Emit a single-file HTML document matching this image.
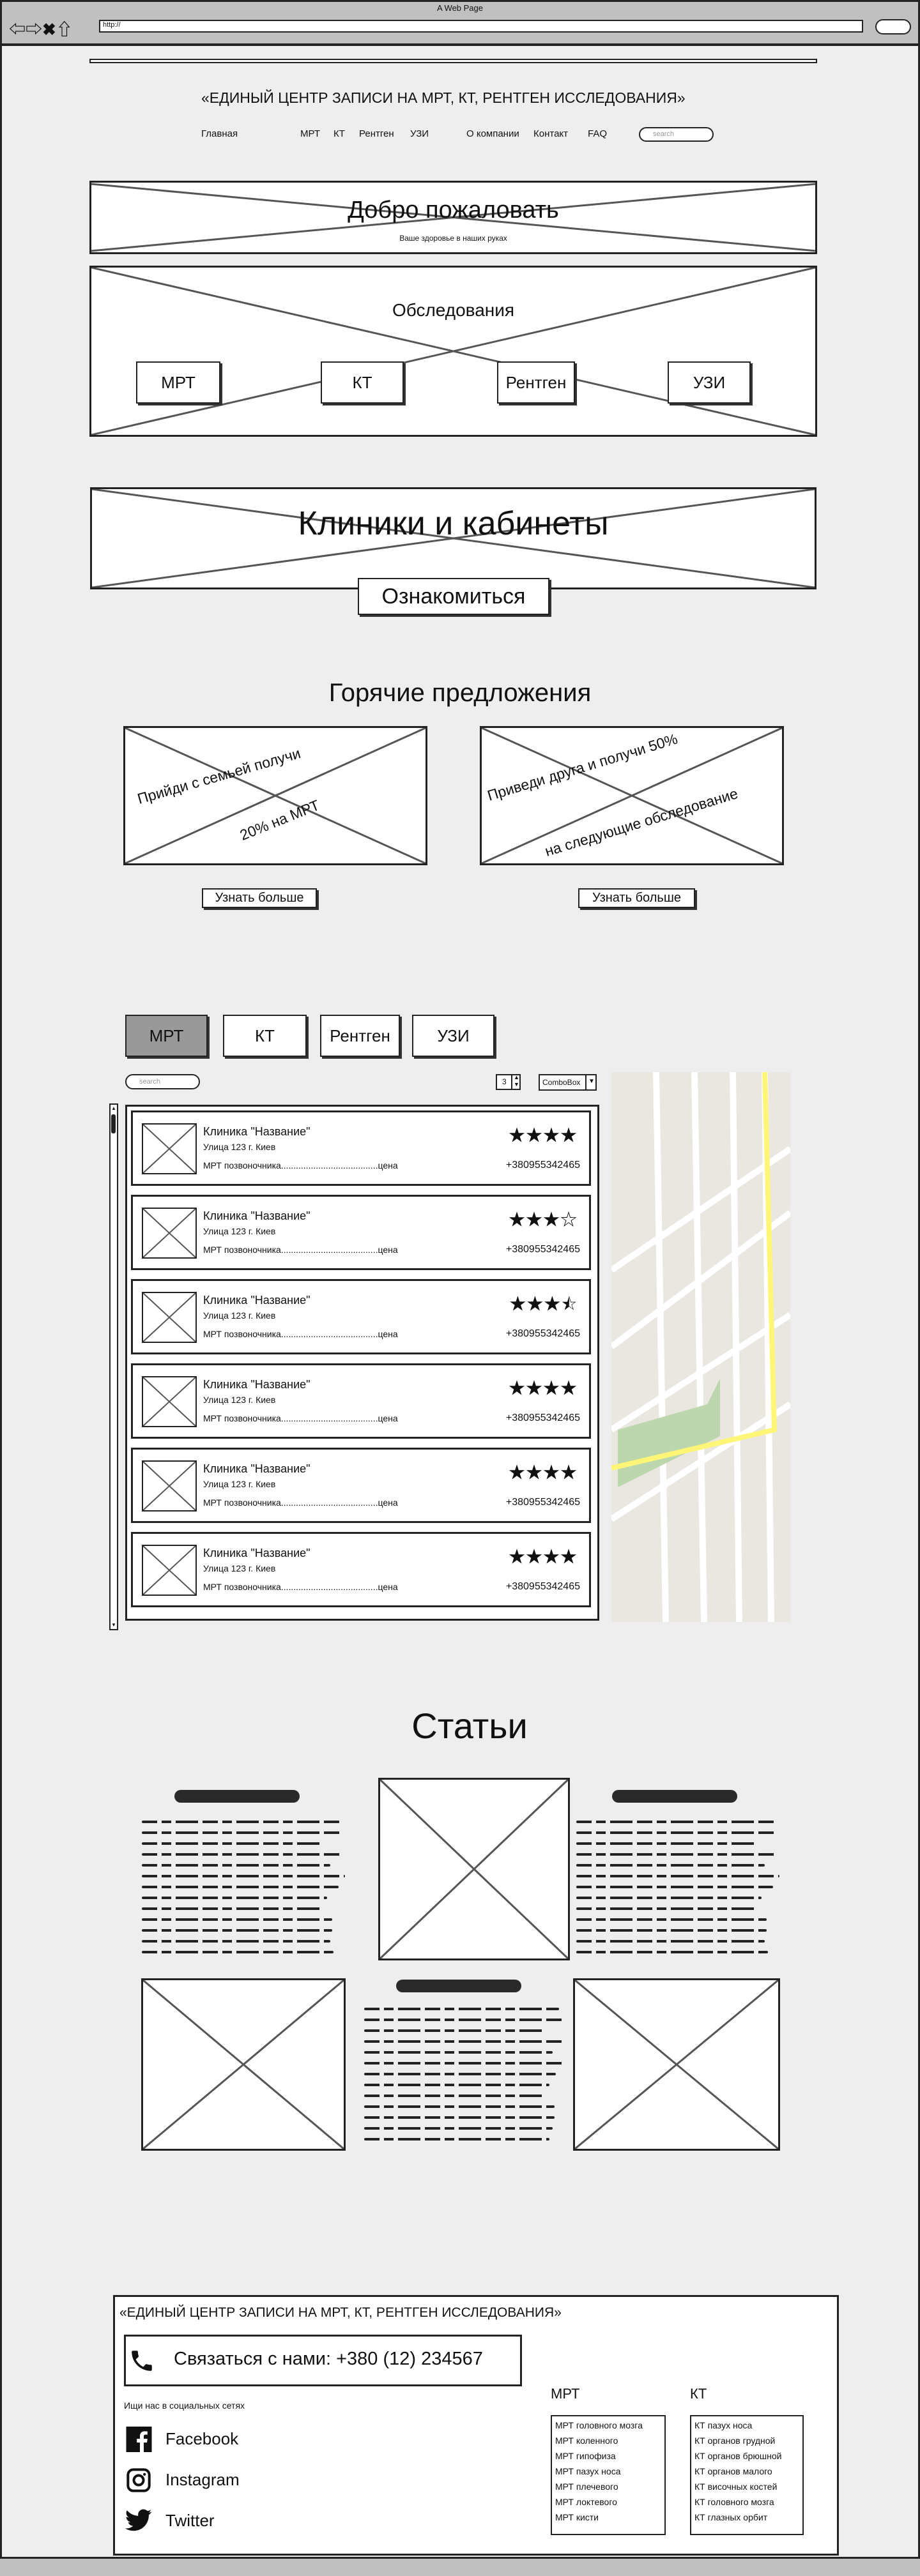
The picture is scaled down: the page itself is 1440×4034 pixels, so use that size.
<!DOCTYPE html>
<html><head><meta charset="utf-8">
<style>
*{box-sizing:border-box;margin:0;padding:0}
html,body{width:1440px;height:4034px;overflow:hidden}
body{background:#eeeeee;position:relative;font-family:"Liberation Sans Narrow","Liberation Sans","Noto Sans CJK SC",sans-serif;color:#111}
.a{position:absolute}
.box{position:absolute;background:#fff;border:3px solid #222}
.x{position:absolute;left:0;top:0;width:100%;height:100%}
.btn{position:absolute;background:#fff;border:2px solid #222;box-shadow:3px 3px 0 #333;display:flex;align-items:center;justify-content:center}
.t{position:absolute;white-space:nowrap}
.sc{position:absolute;height:4px;border-radius:2px;background:repeating-linear-gradient(90deg,#222 0 24px,transparent 24px 31px,#222 31px 46px,transparent 46px 53px,#222 53px 88px,transparent 88px 95px)}
.hd{position:absolute;height:20px;border-radius:10px;background:#2a2a2a}
.card{position:absolute;left:205px;width:720px;height:118px;background:#fff;border:3px solid #222}
.card .im{position:absolute;left:14px;top:17px;width:86px;height:80px;border:2px solid #222}
.card .n{position:absolute;left:110px;top:20px;font-size:18px}
.card .ad{position:absolute;left:110px;top:46px;font-size:14px}
.card .pr{position:absolute;left:110px;top:75px;font-size:14px}
.card .st{position:absolute;right:18px;top:16px;font-size:26px;letter-spacing:1px}
.card .ph{position:absolute;right:14px;top:74px;font-size:16px}
.list li{list-style:none;font-size:14px;height:24px}
.ot{position:absolute;white-space:nowrap;font-size:23px;line-height:23px;transform-origin:left bottom}
</style></head><body>

<div class="a" style="left:0;top:0;width:1440px;height:72px;background:#c0c0c0;border:3px solid #222;border-bottom-width:4px"></div>
<div class="t" style="left:0;width:1440px;text-align:center;top:5px;font-size:13px">A Web Page</div>
<div class="t" style="left:14px;top:26px;font-size:26px;font-weight:bold">⇦⇨✖⇧</div>
<div class="a" style="left:155px;top:31px;width:1196px;height:20px;background:#fff;border:2px solid #222;font-size:11px;padding-left:4px">http://</div>
<div class="a" style="left:1370px;top:30px;width:56px;height:24px;background:#fff;border:2px solid #222;border-radius:12px"></div>
<div class="a" style="left:0;top:72px;width:3px;height:3934px;background:#222"></div>
<div class="a" style="left:1437px;top:72px;width:3px;height:3934px;background:#222"></div>
<div class="a" style="left:0;top:4004px;width:1440px;height:30px;background:#c0c0c0;border-top:3px solid #222"></div>

<div class="a" style="left:140px;top:92px;width:1139px;height:7px;background:#fff;border:2px solid #222"></div>
<div class="t" style="left:315px;top:140px;font-size:23px">«ЕДИНЫЙ ЦЕНТР ЗАПИСИ НА МРТ, КТ, РЕНТГЕН ИССЛЕДОВАНИЯ»</div>
<div class="t" style="left:315px;top:201px;font-size:15px">Главная</div>
<div class="t" style="left:470px;top:201px;font-size:15px">МРТ</div>
<div class="t" style="left:522px;top:201px;font-size:15px">КТ</div>
<div class="t" style="left:562px;top:201px;font-size:15px">Рентген</div>
<div class="t" style="left:642px;top:201px;font-size:15px">УЗИ</div>
<div class="t" style="left:730px;top:201px;font-size:15px">О компании</div>
<div class="t" style="left:835px;top:201px;font-size:15px">Контакт</div>
<div class="t" style="left:920px;top:201px;font-size:15px">FAQ</div>
<div class="a" style="left:1000px;top:199px;width:117px;height:23px;background:#fff;border:2px solid #222;border-radius:12px;font-size:11px;color:#999;padding:3px 0 0 20px">search</div>

<div class="box" style="left:140px;top:283px;width:1139px;height:115px">
<svg class="x" viewBox="0 0 100 100" preserveAspectRatio="none"><path d="M0 2L100 98M0 98L100 2" stroke="#555" stroke-width="3" vector-effect="non-scaling-stroke"/></svg>
<div class="t" style="left:0;width:100%;text-align:center;top:22px;font-size:38px">Добро пожаловать</div>
<div class="t" style="left:0;width:100%;text-align:center;top:80px;font-size:12px">Ваше здоровье в наших руках</div>
</div>

<div class="box" style="left:140px;top:416px;width:1139px;height:268px">
<svg class="x" viewBox="0 0 100 100" preserveAspectRatio="none"><path d="M0 0L100 100M0 100L100 0" stroke="#555" stroke-width="3" vector-effect="non-scaling-stroke"/></svg>
<div class="t" style="left:0;width:100%;text-align:center;top:51px;font-size:28px">Обследования</div>
</div>
<div class="btn" style="left:213px;top:566px;width:132px;height:66px;font-size:26px">МРТ</div>
<div class="btn" style="left:502px;top:566px;width:130px;height:66px;font-size:26px">КТ</div>
<div class="btn" style="left:778px;top:566px;width:122px;height:66px;font-size:26px">Рентген</div>
<div class="btn" style="left:1045px;top:566px;width:130px;height:66px;font-size:26px">УЗИ</div>

<div class="box" style="left:141px;top:763px;width:1137px;height:160px">
<svg class="x" viewBox="0 0 100 100" preserveAspectRatio="none"><path d="M0 0L100 100M0 100L100 0" stroke="#555" stroke-width="3" vector-effect="non-scaling-stroke"/></svg>
<div class="t" style="left:0;width:100%;text-align:center;top:24px;font-size:52px">Клиники и кабинеты</div>
</div>
<div class="btn" style="left:560px;top:905px;width:300px;height:58px;font-size:34px">Ознакомиться</div>

<div class="t" style="left:0;width:1440px;text-align:center;top:1063px;font-size:40px">Горячие предложения</div>

<div class="box" style="left:193px;top:1137px;width:476px;height:218px">
<svg class="x" viewBox="0 0 100 100" preserveAspectRatio="none"><path d="M0 0L100 100M0 100L100 0" stroke="#555" stroke-width="3" vector-effect="non-scaling-stroke"/></svg>
<div class="ot" style="left:23px;top:100px;transform:rotate(-16deg)">Прийди с семьей получи</div>
<div class="ot" style="left:185px;top:157px;transform:rotate(-22deg)">20% на МРТ</div>
</div>
<div class="box" style="left:751px;top:1137px;width:476px;height:218px">
<svg class="x" viewBox="0 0 100 100" preserveAspectRatio="none"><path d="M0 0L100 100M0 100L100 0" stroke="#555" stroke-width="3" vector-effect="non-scaling-stroke"/></svg>
<div class="ot" style="left:13px;top:95px;transform:rotate(-17deg)">Приведи друга и получи 50%</div>
<div class="ot" style="left:103px;top:182px;transform:rotate(-17deg)">на следующие обследование</div>
</div>
<div class="btn" style="left:316px;top:1391px;width:180px;height:31px;font-size:20px">Узнать больше</div>
<div class="btn" style="left:905px;top:1391px;width:183px;height:31px;font-size:20px">Узнать больше</div>

<div class="btn" style="left:196px;top:1589px;width:129px;height:66px;font-size:26px;background:#999">МРТ</div>
<div class="btn" style="left:349px;top:1589px;width:131px;height:66px;font-size:26px">КТ</div>
<div class="btn" style="left:501px;top:1589px;width:125px;height:66px;font-size:26px">Рентген</div>
<div class="btn" style="left:645px;top:1589px;width:129px;height:66px;font-size:26px">УЗИ</div>

<div class="a" style="left:196px;top:1682px;width:117px;height:24px;background:#fff;border:2px solid #222;border-radius:12px;font-size:11px;color:#999;padding:4px 0 0 20px">search</div>
<div class="a" style="left:776px;top:1682px;width:39px;height:25px;background:#fff;border:2px solid #222;font-size:12px;padding:3px 0 0 8px">3</div>
<div class="a" style="left:800px;top:1682px;width:15px;height:25px;border-left:2px solid #222;font-size:9px;line-height:11px;text-align:center">▲<br>▼</div>
<div class="a" style="left:843px;top:1682px;width:91px;height:26px;background:#fff;border:2px solid #222;font-size:12px;padding:4px 0 0 4px">ComboBox</div>
<div class="a" style="left:916px;top:1682px;width:18px;height:26px;border-left:2px solid #222;font-size:10px;padding:6px 0 0 3px">▼</div>

<svg class="a" style="left:957px;top:1679px" width="280" height="861" viewBox="0 0 280 861">
<rect width="280" height="861" fill="#e9e7e0"/>
<g stroke="#fff" stroke-width="10" fill="none">
<path d="M70 0L85 861M130 0L145 861M190 0L200 861M240 0L250 861"/>
<path d="M0 310L280 120M0 430L280 220M0 560L280 380M0 700L280 520"/>
</g>
<path d="M10 560L150 520L170 480L170 570L10 650Z" fill="#bcd7ad"/>
<path d="M240 0L255 560L0 620" stroke="#fff576" stroke-width="8" fill="none"/>
</svg>

<div class="a" style="left:171px;top:1728px;width:14px;height:825px;background:#fff;border:2px solid #222"></div>
<div class="a" style="left:174px;top:1731px;width:8px;height:10px;font-size:8px">▲</div>
<div class="a" style="left:174px;top:1745px;width:7px;height:30px;background:#222;border-radius:3px"></div>
<div class="a" style="left:174px;top:2540px;width:8px;height:10px;font-size:8px">▼</div>
<div class="a" style="left:196px;top:1730px;width:742px;height:808px;background:#fff;border:3px solid #222"></div>

<div class="card" style="top:1739px"><div class="im"><svg class="x" viewBox="0 0 100 100" preserveAspectRatio="none"><path d="M0 0L100 100M0 100L100 0" stroke="#555" stroke-width="2" vector-effect="non-scaling-stroke"/></svg></div><div class="n">Клиника "Название"</div><div class="ad">Улица 123 г. Киев</div><div class="pr">МРТ позвоночника.......................................цена</div><div class="st">★★★★</div><div class="ph">+380955342465</div></div>
<div class="card" style="top:1871px"><div class="im"><svg class="x" viewBox="0 0 100 100" preserveAspectRatio="none"><path d="M0 0L100 100M0 100L100 0" stroke="#555" stroke-width="2" vector-effect="non-scaling-stroke"/></svg></div><div class="n">Клиника "Название"</div><div class="ad">Улица 123 г. Киев</div><div class="pr">МРТ позвоночника.......................................цена</div><div class="st">★★★☆</div><div class="ph">+380955342465</div></div>
<div class="card" style="top:2003px"><div class="im"><svg class="x" viewBox="0 0 100 100" preserveAspectRatio="none"><path d="M0 0L100 100M0 100L100 0" stroke="#555" stroke-width="2" vector-effect="non-scaling-stroke"/></svg></div><div class="n">Клиника "Название"</div><div class="ad">Улица 123 г. Киев</div><div class="pr">МРТ позвоночника.......................................цена</div><div class="st">★★★⯪</div><div class="ph">+380955342465</div></div>
<div class="card" style="top:2135px"><div class="im"><svg class="x" viewBox="0 0 100 100" preserveAspectRatio="none"><path d="M0 0L100 100M0 100L100 0" stroke="#555" stroke-width="2" vector-effect="non-scaling-stroke"/></svg></div><div class="n">Клиника "Название"</div><div class="ad">Улица 123 г. Киев</div><div class="pr">МРТ позвоночника.......................................цена</div><div class="st">★★★★</div><div class="ph">+380955342465</div></div>
<div class="card" style="top:2267px"><div class="im"><svg class="x" viewBox="0 0 100 100" preserveAspectRatio="none"><path d="M0 0L100 100M0 100L100 0" stroke="#555" stroke-width="2" vector-effect="non-scaling-stroke"/></svg></div><div class="n">Клиника "Название"</div><div class="ad">Улица 123 г. Киев</div><div class="pr">МРТ позвоночника.......................................цена</div><div class="st">★★★★</div><div class="ph">+380955342465</div></div>
<div class="card" style="top:2399px"><div class="im"><svg class="x" viewBox="0 0 100 100" preserveAspectRatio="none"><path d="M0 0L100 100M0 100L100 0" stroke="#555" stroke-width="2" vector-effect="non-scaling-stroke"/></svg></div><div class="n">Клиника "Название"</div><div class="ad">Улица 123 г. Киев</div><div class="pr">МРТ позвоночника.......................................цена</div><div class="st">★★★★</div><div class="ph">+380955342465</div></div>

<div class="t" style="left:0;width:1470px;text-align:center;top:2670px;font-size:56px">Статьи</div>

<div class="hd" style="left:273px;top:2803px;width:196px"></div>
<div class="hd" style="left:958px;top:2803px;width:196px"></div>
<div class="hd" style="left:620px;top:3100px;width:196px"></div>

<div class="box" style="left:592px;top:2784px;width:300px;height:286px"><svg class="x" viewBox="0 0 100 100" preserveAspectRatio="none"><path d="M0 0L100 100M0 100L100 0" stroke="#555" stroke-width="3" vector-effect="non-scaling-stroke"/></svg></div>
<div class="box" style="left:221px;top:3098px;width:320px;height:270px"><svg class="x" viewBox="0 0 100 100" preserveAspectRatio="none"><path d="M0 0L100 100M0 100L100 0" stroke="#555" stroke-width="3" vector-effect="non-scaling-stroke"/></svg></div>
<div class="box" style="left:897px;top:3098px;width:324px;height:270px"><svg class="x" viewBox="0 0 100 100" preserveAspectRatio="none"><path d="M0 0L100 100M0 100L100 0" stroke="#555" stroke-width="3" vector-effect="non-scaling-stroke"/></svg></div>

<div class="sc" style="left:222px;top:2851px;width:310px"></div>
<div class="sc" style="left:222px;top:2868px;width:315px"></div>
<div class="sc" style="left:222px;top:2885px;width:285px"></div>
<div class="sc" style="left:222px;top:2902px;width:315px"></div>
<div class="sc" style="left:222px;top:2919px;width:295px"></div>
<div class="sc" style="left:222px;top:2936px;width:318px"></div>
<div class="sc" style="left:222px;top:2953px;width:308px"></div>
<div class="sc" style="left:222px;top:2970px;width:290px"></div>
<div class="sc" style="left:222px;top:2987px;width:285px"></div>
<div class="sc" style="left:222px;top:3004px;width:298px"></div>
<div class="sc" style="left:222px;top:3021px;width:298px"></div>
<div class="sc" style="left:222px;top:3038px;width:295px"></div>
<div class="sc" style="left:222px;top:3055px;width:300px"></div>
<div class="sc" style="left:902px;top:2851px;width:310px"></div>
<div class="sc" style="left:902px;top:2868px;width:315px"></div>
<div class="sc" style="left:902px;top:2885px;width:285px"></div>
<div class="sc" style="left:902px;top:2902px;width:315px"></div>
<div class="sc" style="left:902px;top:2919px;width:295px"></div>
<div class="sc" style="left:902px;top:2936px;width:318px"></div>
<div class="sc" style="left:902px;top:2953px;width:308px"></div>
<div class="sc" style="left:902px;top:2970px;width:290px"></div>
<div class="sc" style="left:902px;top:2987px;width:285px"></div>
<div class="sc" style="left:902px;top:3004px;width:298px"></div>
<div class="sc" style="left:902px;top:3021px;width:298px"></div>
<div class="sc" style="left:902px;top:3038px;width:295px"></div>
<div class="sc" style="left:902px;top:3055px;width:300px"></div>
<div class="sc" style="left:570px;top:3144px;width:305px"></div>
<div class="sc" style="left:570px;top:3161px;width:310px"></div>
<div class="sc" style="left:570px;top:3178px;width:285px"></div>
<div class="sc" style="left:570px;top:3195px;width:310px"></div>
<div class="sc" style="left:570px;top:3212px;width:295px"></div>
<div class="sc" style="left:570px;top:3229px;width:312px"></div>
<div class="sc" style="left:570px;top:3246px;width:300px"></div>
<div class="sc" style="left:570px;top:3263px;width:290px"></div>
<div class="sc" style="left:570px;top:3280px;width:285px"></div>
<div class="sc" style="left:570px;top:3297px;width:298px"></div>
<div class="sc" style="left:570px;top:3314px;width:298px"></div>
<div class="sc" style="left:570px;top:3331px;width:295px"></div>
<div class="sc" style="left:570px;top:3348px;width:290px"></div>

<div class="box" style="left:177px;top:3594px;width:1136px;height:408px"></div>
<div class="t" style="left:187px;top:3610px;font-size:21px">«ЕДИНЫЙ ЦЕНТР ЗАПИСИ НА МРТ, КТ, РЕНТГЕН ИССЛЕДОВАНИЯ»</div>
<div class="a" style="left:194px;top:3656px;width:623px;height:81px;border:3px solid #222;background:#fff"></div>
<svg class="a" style="left:200px;top:3676px" width="44" height="42" viewBox="0 0 24 24"><path d="M6.6 10.8c1.4 2.8 3.8 5.1 6.6 6.6l2.2-2.2c.3-.3.7-.4 1-.2 1.1.4 2.3.6 3.6.6.6 0 1 .4 1 1V20c0 .6-.4 1-1 1C10.6 21 3 13.4 3 4c0-.6.4-1 1-1h3.5c.6 0 1 .4 1 1 0 1.3.2 2.5.6 3.6.1.3 0 .7-.2 1z" fill="#111"/></svg>
<div class="t" style="left:272px;top:3678px;font-size:29px">Связаться с нами: +380 (12) 234567</div>
<div class="t" style="left:194px;top:3759px;font-size:14px">Ищи нас в социальных сетях</div>
<svg class="a" style="left:197px;top:3800px" width="41" height="40" viewBox="0 0 24 24"><rect width="24" height="24" fill="#111"/><path d="M16.5 24v-9h3l.5-3.5h-3.5V9.3c0-1 .3-1.7 1.8-1.7H20V4.5c-.3 0-1.4-.1-2.7-.1-2.7 0-4.4 1.6-4.4 4.6v2.5H10V15h2.9v9z" fill="#fff"/></svg>
<div class="t" style="left:259px;top:3804px;font-size:26px">Facebook</div>
<svg class="a" style="left:197px;top:3864px" width="40" height="40" viewBox="0 0 24 24"><rect x="2" y="2" width="20" height="20" rx="5" fill="none" stroke="#111" stroke-width="2.4"/><circle cx="12" cy="12" r="4.5" fill="none" stroke="#111" stroke-width="2.4"/><circle cx="17.5" cy="6.5" r="1.3" fill="#111"/></svg>
<div class="t" style="left:259px;top:3868px;font-size:26px">Instagram</div>
<svg class="a" style="left:196px;top:3928px" width="42" height="38" viewBox="0 0 24 20"><path d="M23.6 2.3c-.9.4-1.8.6-2.8.8 1-.6 1.8-1.6 2.1-2.7-.9.6-2 1-3.1 1.2C19 .6 17.700 0 16.3 0c-2.7 0-4.8 2.2-4.8 4.8 0 .4 0 .8.1 1.1C7.5 5.7 4 3.8 1.6.9c-.4.7-.7 1.6-.7 2.4 0 1.700.9 3.2 2.2 4-.8 0-1.5-.2-2.2-.6v.1c0 2.3 1.7 4.3 3.9 4.7-.4.1-.8.2-1.3.2-.3 0-.6 0-.9-.1.6 1.9 2.4 3.3 4.5 3.4-1.7 1.3-3.7 2.1-6 2.1H0c2.1 1.4 4.7 2.2 7.4 2.2 8.9 0 13.7-7.4 13.7-13.7v-.6c1-.7 1.8-1.6 2.5-2.5z" fill="#111"/></svg>
<div class="t" style="left:259px;top:3932px;font-size:26px">Twitter</div>

<div class="t" style="left:862px;top:3736px;font-size:22px">МРТ</div>
<div class="t" style="left:1080px;top:3736px;font-size:22px">КТ</div>
<div class="box list" style="left:862px;top:3782px;width:180px;height:188px;border-width:2px;padding:6px 0 0 5px">
<li>МРТ головного мозга</li><li>МРТ коленного</li><li>МРТ гипофиза</li><li>МРТ пазух носа</li><li>МРТ плечевого</li><li>МРТ локтевого</li><li>МРТ кисти</li></div>
<div class="box list" style="left:1080px;top:3782px;width:178px;height:188px;border-width:2px;padding:6px 0 0 5px">
<li>КТ пазух носа</li><li>КТ органов грудной</li><li>КТ органов брюшной</li><li>КТ органов малого</li><li>КТ височных костей</li><li>КТ головного мозга</li><li>КТ глазных орбит</li></div>

</body></html>
